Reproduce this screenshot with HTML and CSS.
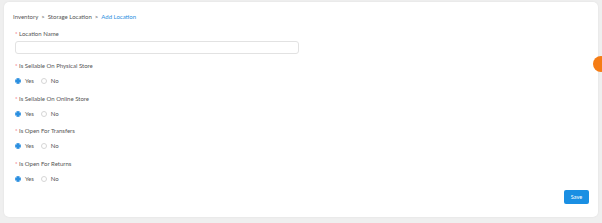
FILE: index.html
```html
<!DOCTYPE html>
<html lang="en">
<head>
    <meta charset="UTF-8">
    <title>Add Location</title>
    <link rel="stylesheet" href="styles.css">
</head>
<body>
    <div class="card">
        <div class="breadcrumb">
            <span>Inventory</span>
            <span class="sep">&gt;</span>
            <span>Storage Location</span>
            <span class="sep">&gt;</span>
            <span class="current">Add Location</span>
        </div>

        <div class="field first">
            <label><span class="req">*</span> Location Name</label>
            <input type="text" class="text-input">
        </div>

        <div class="field">
            <label><span class="req">*</span> Is Sellable On Physical Store</label>
            <div class="radios">
                <span class="radio checked"></span><span>Yes</span>
                <span class="radio"></span><span>No</span>
            </div>
        </div>

        <div class="field">
            <label><span class="req">*</span> Is Sellable On Online Store</label>
            <div class="radios">
                <span class="radio checked"></span><span>Yes</span>
                <span class="radio"></span><span>No</span>
            </div>
        </div>

        <div class="field">
            <label><span class="req">*</span> Is Open For Transfers</label>
            <div class="radios">
                <span class="radio checked"></span><span>Yes</span>
                <span class="radio"></span><span>No</span>
            </div>
        </div>

        <div class="field">
            <label><span class="req">*</span> Is Open For Returns</label>
            <div class="radios">
                <span class="radio checked"></span><span>Yes</span>
                <span class="radio"></span><span>No</span>
            </div>
        </div>

        <div class="actions">
            <button class="save-btn">Save</button>
        </div>
    </div>
    <div class="fab"></div>
</body>
</html>
```

FILE: styles.css
```css
body {
    margin: 0;
    background-color: #efefef;
    font-family: Lato, "Open Sans", sans-serif;
    color: #555;
    font-size: 6px;
    height: 223px;
    overflow: hidden;
}
.card {
    background-color: #ffffff;
    margin: 2px 4px 0 4px;
    height: 215px;
    border-radius: 5px;
    box-sizing: border-box;
    padding: 11px 11px 0 11px;
    box-shadow: 0 0 2px rgba(0,0,0,0.08);
}
.breadcrumb {
    display: flex;
    gap: 3px;
    height: 8px;
    line-height: 8px;
    margin-left: -2px;
    color: #555;
}
.breadcrumb .current {
    color: #2b8fe0;
}
.field {
    margin-top: 9.6px;
}
.field.first {
    margin-top: 8.5px;
}
label {
    display: block;
    height: 8px;
    line-height: 8px;
    color: #555;
}
.req {
    color: #f0505a;
}
.text-input {
    display: block;
    width: 284px;
    height: 13px;
    margin-top: 3.5px;
    border: 1px solid #e2e2e2;
    border-radius: 3px;
    box-sizing: border-box;
}
.first + .field {
    margin-top: 8px;
}
.radios {
    display: flex;
    align-items: center;
    margin-top: 7px;
    height: 8px;
    line-height: 8px;
}
.radio {
    width: 6px;
    height: 6px;
    border: 1px solid #d6d6d6;
    border-radius: 50%;
    margin-right: 4px;
    box-sizing: border-box;
}
.radio + span {
    margin-right: 7px;
}
.radio.checked {
    border-color: #2b8fe0;
    background: radial-gradient(circle, #2b8fe0 0 1.6px, #fff 1.7px);
}
.actions {
    display: flex;
    justify-content: flex-end;
    margin-top: 7px;
}
.save-btn {
    background-color: #1a8fe3;
    color: white;
    border: none;
    border-radius: 2px;
    font-family: Lato, sans-serif;
    font-size: 5.5px;
    width: 25px;
    height: 14px;
    padding: 0;
    margin-right: -2px;
}
.fab {
    position: absolute;
    left: 593px;
    top: 56px;
    width: 16px;
    height: 16px;
    border-radius: 50%;
    background-color: #f57c14;
}
```
